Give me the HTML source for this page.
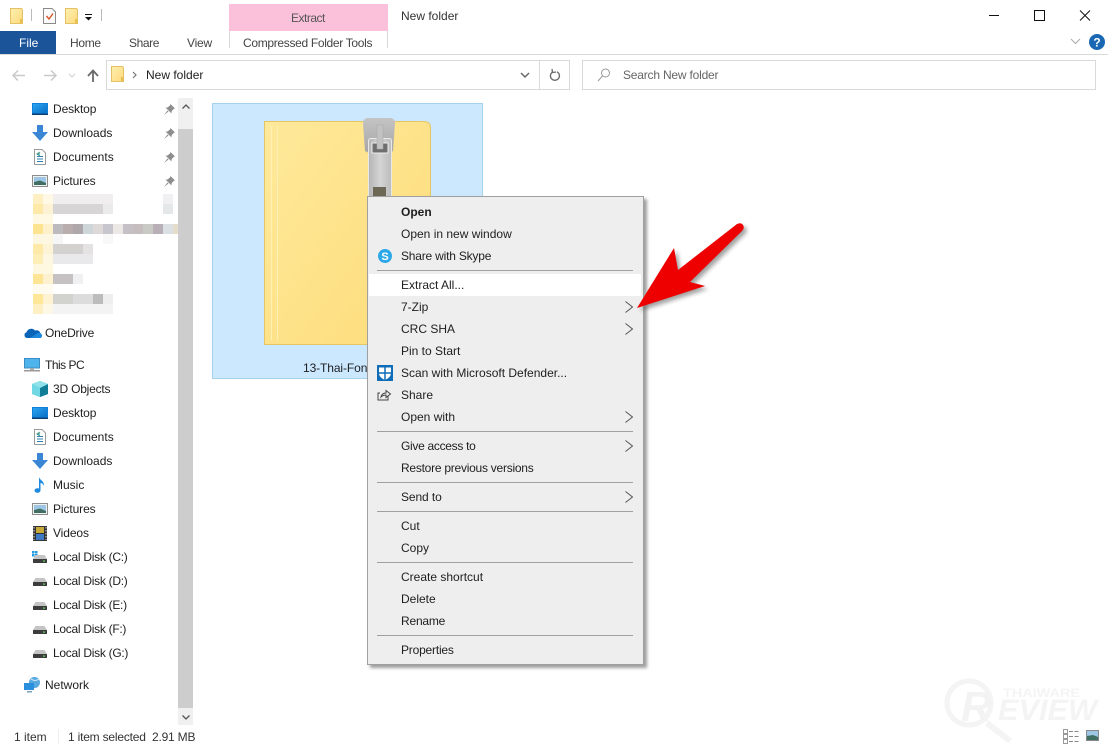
<!DOCTYPE html>
<html><head><meta charset="utf-8"><title>New folder</title>
<style>
html,body{margin:0;padding:0;background:#fff;}
body{width:1108px;height:748px;position:relative;overflow:hidden;font-family:"Liberation Sans",sans-serif;font-size:12px;color:#1e1e1e;}
.t{position:absolute;white-space:nowrap;line-height:16px;height:16px;}
.a{position:absolute;}
svg{position:absolute;overflow:visible;}
.sep{position:absolute;left:377px;width:256px;height:1px;background:#a0a0a0;}
</style></head><body>
<svg width="0" height="0" style="left:0;top:0"><defs>
<linearGradient id="fy" x1="0" y1="0" x2="1" y2="1"><stop offset="0" stop-color="#fff0b0"/><stop offset="1" stop-color="#fdd97c"/></linearGradient>
<linearGradient id="big" x1="0" y1="0" x2="1" y2="1"><stop offset="0" stop-color="#fee99a"/><stop offset="1" stop-color="#fedc7a"/></linearGradient>
<linearGradient id="zip" x1="0" y1="0" x2="1" y2="0"><stop offset="0" stop-color="#b4b4b4"/><stop offset=".5" stop-color="#d4d4d4"/><stop offset="1" stop-color="#bcbcbc"/></linearGradient>
<linearGradient id="cap" x1="0" y1="0" x2="0" y2="1"><stop offset="0" stop-color="#c4c4c4"/><stop offset="1" stop-color="#a6a6a6"/></linearGradient>
<linearGradient id="blu" x1="0" y1="0" x2="1" y2="1"><stop offset="0" stop-color="#2aa5f0"/><stop offset="1" stop-color="#0a6fc8"/></linearGradient>
<symbol id="sf" viewBox="0 0 13 16"><path d="M.5.5H11.5L12.5 1.5V15.5H.5Z" fill="url(#fy)" stroke="#e3c164"/><rect x="10" y="11" width="2.5" height="4.5" fill="#e9c04f"/></symbol>
<symbol id="desk" viewBox="0 0 16 12"><rect width="16" height="12" fill="#0f80dc"/><rect x="1" y="1" width="14" height="9" fill="url(#blu)"/><rect y="10.5" width="16" height="1.5" fill="#0a3f70"/></symbol>
<symbol id="down" viewBox="0 0 16 16"><path d="M5 0H11V7H16L8 16L0 7H5Z" fill="#3b87d6"/></symbol>
<symbol id="doc" viewBox="0 0 12 16"><path d="M.5.5H8L11.5 4V15.5H.5Z" fill="#fff" stroke="#9a9a9a"/><path d="M3 5H6M3 7.5H9M3 10H9M3 12.500H9" stroke="#2f7fb5"/><path d="M6 3L3 5L6 7" fill="none" stroke="#3c9a7a"/></symbol>
<symbol id="pic" viewBox="0 0 16 12"><rect x=".5" y=".5" width="15" height="11" fill="#f0f0f0" stroke="#8c8c8c"/><rect x="2" y="2" width="12" height="8" fill="#9cc6e4"/><path d="M2 7L8 5.500L14 8V10H2Z" fill="#3f6f63"/></symbol>
<symbol id="pin" viewBox="0 0 11 11"><path d="M6.500 0L11 4.500L9.500 5L7.500 7.500L7.500 9.500L1.500 3.500L3.500 3.500L6 1.500Z M3.500 6.500L0 11L4.500 7.500Z" fill="#8d8d8d"/></symbol>
<symbol id="disk" viewBox="0 0 14 8"><path d="M2.500 0H11.500L14 4H0Z" fill="#c4c4c4"/><rect y="4" width="14" height="4" fill="#3c3c3c"/><rect x="10" y="5.500" width="2" height="1.200" fill="#5fd35f"/></symbol>
<symbol id="arr" viewBox="0 0 8 12"><path d="M.5.500L7.500 6L.5 11.500" fill="none" stroke="#555"/></symbol>
</defs></svg>

<!-- title / quick access -->
<svg style="left:10px;top:8px" width="13" height="16"><use href="#sf" width="13" height="16"/></svg>
<div class="a" style="left:31px;top:9px;width:1px;height:12px;background:#bbb"></div>
<svg style="left:43px;top:8px" width="13" height="16"><path d="M.5.500H9L12.500 4V15.500H.5Z" fill="#fafafa" stroke="#8a8a8a"/><path d="M3.500 8L6 11L10 5.500" fill="none" stroke="#d9542b" stroke-width="1.400"/></svg>
<svg style="left:65px;top:8px" width="13" height="16"><use href="#sf" width="13" height="16"/></svg>
<svg style="left:85px;top:14px" width="8" height="7"><rect width="7" height="1" fill="#111"/><path d="M0 3H7L3.500 6.500Z" fill="#111"/></svg>
<div class="a" style="left:101px;top:9px;width:1px;height:12px;background:#bbb"></div>
<div class="a" style="left:229px;top:4px;width:159px;height:27px;background:#fcc1da"></div>
<div class="t" style="left:291px;top:10px;color:#555;letter-spacing:-.5px">Extract</div>
<div class="t" style="left:401px;top:8px;color:#333">New folder</div>
<svg style="left:985px;top:8px" width="110" height="16"><path d="M4 7.500H14" stroke="#111"/><rect x="49.500" y="2.500" width="10" height="10" fill="none" stroke="#111"/><path d="M95 2.500L105 12.500M105 2.500L95 12.500" stroke="#111"/></svg>

<!-- ribbon -->
<div class="a" style="left:0;top:31px;width:56px;height:23px;background:#1b5499"></div>
<div class="t" style="left:19px;top:35px;color:#fff;">File</div>
<div class="t" style="left:70px;top:35px;color:#444;letter-spacing:-.3px">Home</div>
<div class="t" style="left:129px;top:35px;color:#444;letter-spacing:-.4px">Share</div>
<div class="t" style="left:187px;top:35px;color:#444;letter-spacing:-.2px">View</div>
<div class="a" style="left:229px;top:31px;width:1px;height:17px;background:#d8d8d8"></div>
<div class="a" style="left:387px;top:31px;width:1px;height:17px;background:#d8d8d8"></div>
<div class="t" style="left:243px;top:35px;color:#444;letter-spacing:-.32px">Compressed Folder Tools</div>
<div class="a" style="left:0;top:54px;width:1108px;height:1px;background:#dadada"></div>
<svg style="left:1070px;top:38px" width="11" height="7"><path d="M1 1L5.500 5.500L10 1" fill="none" stroke="#a8a8a8"/></svg>
<svg style="left:1089px;top:34px" width="16" height="16"><circle cx="8" cy="8" r="8" fill="#1a68b4"/><text x="8" y="12.500" text-anchor="middle" font-family="Liberation Sans" font-weight="bold" font-size="12" fill="#fff">?</text></svg>

<!-- nav -->
<svg style="left:12px;top:69px" width="100" height="14"><path d="M1.500 6.500H13M6 1.500L1 6.500L6 11.500" fill="none" stroke="#c9c9c9" stroke-width="1.500"/><path d="M43.500 6.500H32M39 1.500L44 6.500L39 11.500" fill="none" stroke="#c9c9c9" stroke-width="1.500"/><path d="M57 5L60 8L63 5" fill="none" stroke="#cfcfcf"/><path d="M81 13V2M76 7L81 1.500L86 7" fill="none" stroke="#6a6a6a" stroke-width="1.800"/></svg>
<div class="a" style="left:106px;top:60px;width:462px;height:28px;border:1px solid #d9d9d9"></div>
<div class="a" style="left:539px;top:61px;width:1px;height:28px;background:#d9d9d9"></div>
<svg style="left:111px;top:66px" width="13" height="16"><use href="#sf" width="13" height="16"/></svg>
<svg style="left:132px;top:71px" width="5" height="8"><path d="M1 1L4 4L1 7" fill="none" stroke="#777" stroke-width="1.200"/></svg>
<div class="t" style="left:146px;top:67px">New folder</div>
<svg style="left:520px;top:72px" width="10" height="6"><path d="M1 1L5 5L9 1" fill="none" stroke="#666" stroke-width="1.500"/></svg>
<svg style="left:549px;top:68px" width="12" height="14"><path d="M3.500 4A4.500 4.500 0 1 0 8 3.800" fill="none" stroke="#6a6a6a" stroke-width="1.300"/><path d="M3 1L3.500 4.500L7 4" fill="none" stroke="#6a6a6a" stroke-width="1.300"/></svg>
<div class="a" style="left:582px;top:60px;width:512px;height:28px;border:1px solid #d9d9d9"></div>
<svg style="left:597px;top:68px" width="14" height="14"><circle cx="8.500" cy="5" r="4" fill="none" stroke="#999"/><path d="M5.500 8L1 13" stroke="#999"/></svg>
<div class="t" style="left:623px;top:67px;color:#666;letter-spacing:-.2px">Search New folder</div>

<!-- sidebar -->
<svg style="left:32px;top:103px" width="16" height="12"><use href="#desk" width="16" height="12"/></svg>
<div class="t" style="left:53px;top:101px;letter-spacing:-.1px">Desktop</div>
<svg style="left:32px;top:125px" width="16" height="16"><use href="#down" width="16" height="16"/></svg>
<div class="t" style="left:53px;top:125px">Downloads</div>
<svg style="left:34px;top:149px" width="12" height="16"><use href="#doc" width="12" height="16"/></svg>
<div class="t" style="left:53px;top:149px">Documents</div>
<svg style="left:32px;top:175px" width="16" height="12"><use href="#pic" width="16" height="12"/></svg>
<div class="t" style="left:53px;top:173px;letter-spacing:-.1px">Pictures</div>
<svg style="left:164px;top:104px" width="11" height="11"><use href="#pin" width="11" height="11"/></svg>
<svg style="left:164px;top:128px" width="11" height="11"><use href="#pin" width="11" height="11"/></svg>
<svg style="left:164px;top:152px" width="11" height="11"><use href="#pin" width="11" height="11"/></svg>
<svg style="left:164px;top:176px" width="11" height="11"><use href="#pin" width="11" height="11"/></svg>

<!-- blurred rows -->
<svg style="left:33px;top:194px" width="145" height="120">
<rect x="0" y="0" width="10" height="10" fill="#fff0c4"/><rect x="10" y="0" width="10" height="10" fill="#fff8e4"/><rect x="20" y="0" width="60" height="10" fill="#f0eeee"/><rect x="130" y="0" width="10" height="10" fill="#f0f0f2"/>
<rect x="0" y="10" width="10" height="10" fill="#fee9a8"/><rect x="10" y="10" width="10" height="10" fill="#fdf3d4"/><rect x="20" y="10" width="50" height="10" fill="#d8d5d6"/><rect x="70" y="10" width="10" height="10" fill="#ebebeb"/><rect x="130" y="10" width="10" height="10" fill="#e4e8e8"/>
<rect x="0" y="20" width="20" height="10" fill="#fff8e2"/>
<rect x="0" y="30" width="10" height="10" fill="#fee391"/><rect x="10" y="30" width="10" height="10" fill="#fdf1cc"/><rect x="20" y="30" width="10" height="10" fill="#bdbabd"/><rect x="30" y="30" width="10" height="10" fill="#b9adae"/><rect x="40" y="30" width="10" height="10" fill="#aea8aa"/><rect x="50" y="30" width="10" height="10" fill="#cfd6da"/><rect x="60" y="30" width="10" height="10" fill="#dcd9d8"/><rect x="70" y="30" width="10" height="10" fill="#c7c5cd"/><rect x="80" y="30" width="10" height="10" fill="#ece8e6"/><rect x="90" y="30" width="10" height="10" fill="#c4c0c5"/><rect x="100" y="30" width="10" height="10" fill="#c5bdbe"/><rect x="110" y="30" width="10" height="10" fill="#c9c9c6"/><rect x="120" y="30" width="10" height="10" fill="#b9afb6"/><rect x="130" y="30" width="10" height="10" fill="#dbe0e4"/><rect x="140" y="30" width="5" height="10" fill="#e5dccb"/>
<rect x="0" y="40" width="20" height="10" fill="#fdf6e0"/><rect x="20" y="40" width="10" height="10" fill="#f6f6f6"/><rect x="70" y="40" width="10" height="10" fill="#f8f8f8"/>
<rect x="0" y="50" width="10" height="10" fill="#feeaa8"/><rect x="10" y="50" width="10" height="10" fill="#fdf4d6"/><rect x="20" y="50" width="30" height="10" fill="#d4d2d0"/><rect x="50" y="50" width="10" height="10" fill="#e4e2e2"/>
<rect x="0" y="60" width="10" height="10" fill="#feeeb8"/><rect x="10" y="60" width="10" height="10" fill="#fdf6e0"/><rect x="20" y="60" width="40" height="10" fill="#e9e8ea"/>
<rect x="0" y="70" width="20" height="10" fill="#fff8e0"/>
<rect x="0" y="80" width="10" height="10" fill="#fee596"/><rect x="10" y="80" width="10" height="10" fill="#fdf1cf"/><rect x="20" y="80" width="20" height="10" fill="#c6c2c3"/><rect x="40" y="80" width="10" height="10" fill="#f0f0f2"/>
<rect x="0" y="90" width="20" height="10" fill="#fffbee"/>
<rect x="0" y="100" width="10" height="10" fill="#fee798"/><rect x="10" y="100" width="10" height="10" fill="#fdf3d2"/><rect x="20" y="100" width="20" height="10" fill="#d2d2cf"/><rect x="40" y="100" width="20" height="10" fill="#dcdcdc"/><rect x="60" y="100" width="10" height="10" fill="#bcbcbc"/><rect x="70" y="100" width="10" height="10" fill="#eeeeee"/>
<rect x="0" y="110" width="10" height="10" fill="#fff0c4"/><rect x="10" y="110" width="10" height="10" fill="#fdf8e6"/><rect x="20" y="110" width="60" height="10" fill="#f3f3f3"/>
</svg>

<svg style="left:24px;top:327px" width="17" height="11"><path d="M3 11A3 3 0 0 1 2.500 5.200A5 5 0 0 1 11 3.500A4 4 0 0 1 14 11Z" fill="#0a64b8"/><path d="M6 11L17 11A2.500 2.500 0 0 0 13 6.500Z" fill="#1e88dc"/></svg>
<div class="t" style="left:45px;top:325px;letter-spacing:-.2px">OneDrive</div>
<svg style="left:24px;top:358px" width="16" height="14"><rect x=".5" y=".5" width="15" height="9.500" fill="#4fb4ec" stroke="#3b8cc0"/><rect x="6" y="10" width="4" height="2" fill="#aaa"/><rect y="12" width="16" height="1.500" fill="#9a9a9a"/></svg>
<div class="t" style="left:45px;top:357px;letter-spacing:-.5px">This PC</div>
<svg style="left:32px;top:381px" width="16" height="16"><path d="M8 0L16 3V13L8 16L0 13V3Z" fill="#1fa8b8"/><path d="M8 7L16 3V13L8 16Z" fill="#0f7d96"/><path d="M0 3L8 0L16 3L8 7Z" fill="#8fe2ea"/><path d="M0 3L8 7V16L0 13Z" fill="#6fd8e4"/></svg>
<div class="t" style="left:53px;top:381px;letter-spacing:-.2px">3D Objects</div>
<svg style="left:32px;top:407px" width="16" height="12"><use href="#desk" width="16" height="12"/></svg>
<div class="t" style="left:53px;top:405px;letter-spacing:-.1px">Desktop</div>
<svg style="left:34px;top:429px" width="12" height="16"><use href="#doc" width="12" height="16"/></svg>
<div class="t" style="left:53px;top:429px">Documents</div>
<svg style="left:32px;top:453px" width="16" height="16"><use href="#down" width="16" height="16"/></svg>
<div class="t" style="left:53px;top:453px">Downloads</div>
<svg style="left:34px;top:477px" width="12" height="16"><ellipse cx="3.500" cy="13.500" rx="3" ry="2.300" fill="#1b8ae0"/><path d="M5 13V0C5.500 3 10.500 4 10 9C9 6.500 7.500 6 6.500 6V13Z" fill="#1b8ae0"/></svg>
<div class="t" style="left:53px;top:477px">Music</div>
<svg style="left:32px;top:503px" width="16" height="12"><use href="#pic" width="16" height="12"/></svg>
<div class="t" style="left:53px;top:501px;letter-spacing:-.1px">Pictures</div>
<svg style="left:33px;top:526px" width="14" height="15"><rect width="14" height="15" fill="#333"/><rect x="3" y="1" width="8" height="6" fill="#c9a83a"/><rect x="3" y="8" width="8" height="6" fill="#3d79c4"/><path d="M1 1V14M13 1V14" stroke="#ddd" stroke-dasharray="1.500 1.500"/></svg>
<div class="t" style="left:53px;top:525px;letter-spacing:-.1px">Videos</div>
<svg style="left:32px;top:551px" width="15" height="12"><g fill="#1e9ae0"><rect width="2.500" height="2.500"/><rect x="3" width="2.500" height="2.500"/><rect y="3" width="2.500" height="2.500"/><rect x="3" y="3" width="2.500" height="2.500"/></g><use href="#disk" y="4" x="1" width="14" height="8"/></svg>
<div class="t" style="left:53px;top:549px;letter-spacing:-.28px">Local Disk (C:)</div>
<svg style="left:33px;top:578px" width="14" height="8"><use href="#disk" width="14" height="8"/></svg>
<div class="t" style="left:53px;top:573px;letter-spacing:-.28px">Local Disk (D:)</div>
<svg style="left:33px;top:602px" width="14" height="8"><use href="#disk" width="14" height="8"/></svg>
<div class="t" style="left:53px;top:597px;letter-spacing:-.28px">Local Disk (E:)</div>
<svg style="left:33px;top:626px" width="14" height="8"><use href="#disk" width="14" height="8"/></svg>
<div class="t" style="left:53px;top:621px;letter-spacing:-.28px">Local Disk (F:)</div>
<svg style="left:33px;top:650px" width="14" height="8"><use href="#disk" width="14" height="8"/></svg>
<div class="t" style="left:53px;top:645px;letter-spacing:-.28px">Local Disk (G:)</div>
<svg style="left:24px;top:677px" width="17" height="16"><circle cx="10.500" cy="5.500" r="5.500" fill="#5aa8e0"/><path d="M7 2Q11 5 15 2" fill="none" stroke="#d5ecfa"/><rect y="6" width="10" height="7" fill="#2a8fdc"/><rect x="3" y="14" width="5" height="1.500" fill="#7a9fb8"/></svg>
<div class="t" style="left:45px;top:677px">Network</div>

<!-- scrollbar -->
<div class="a" style="left:178px;top:98px;width:15px;height:627px;background:#f0f0f0"></div>
<div class="a" style="left:178px;top:129px;width:15px;height:579px;background:#cdcdcd"></div>
<svg style="left:182px;top:104px" width="8" height="5"><path d="M.5 4.500L4 1L7.500 4.500" fill="none" stroke="#555" stroke-width="1.300"/></svg>
<svg style="left:182px;top:715px" width="8" height="5"><path d="M.5.500L4 4L7.500.5" fill="none" stroke="#555" stroke-width="1.300"/></svg>

<!-- selected item -->
<div class="a" style="left:212px;top:103px;width:269px;height:274px;background:#cce8ff;border:1px solid #a6d2ee"></div>
<svg style="left:264px;top:118px" width="170" height="230">
<path d="M.5 3.500H160Q166.500 3.500 166.500 10V226.500H.5Z" fill="url(#big)" stroke="#e6c566"/>
<path d="M7.500 8V222M13.500 8V222" stroke="#fff0b8"/>
<path d="M103 0H127Q131 1 131 5L129 33L126 35H105L101 33L99 5Q99 1 103 0Z" fill="url(#cap)"/>
<rect x="104.500" y="20.500" width="23" height="70" rx="2" fill="url(#zip)" stroke="#e8e8e8"/>
<rect x="108" y="25" width="16" height="10" fill="#6f6f6f" stroke="#eee"/>
<rect x="113" y="7" width="6" height="24" fill="#c2c2c2" stroke="#a8a8a8" stroke-width=".5"/>
<rect x="109" y="69" width="13" height="9" fill="#6d6856"/>
</svg>
<div class="t" style="left:303px;top:360px;letter-spacing:-.1px">13-Thai-Fon</div>

<!-- context menu -->
<div class="a" style="left:367px;top:196px;width:275px;height:467px;background:#eeeeee;border:1px solid #a0a0a0;box-shadow:3px 3px 3px rgba(80,80,80,.55)"></div>
<div class="a" style="left:369px;top:274px;width:272px;height:22px;background:#fff"></div>
<div class="t" style="left:401px;top:204px;font-weight:bold">Open</div>
<div class="t" style="left:401px;top:226px">Open in new window</div>
<div class="t" style="left:401px;top:248px;letter-spacing:-.2px">Share with Skype</div>
<div class="sep" style="top:270px"></div>
<div class="t" style="left:401px;top:277px">Extract All...</div>
<div class="t" style="left:401px;top:299px">7-Zip</div>
<div class="t" style="left:401px;top:321px">CRC SHA</div>
<div class="t" style="left:401px;top:343px">Pin to Start</div>
<div class="t" style="left:401px;top:365px">Scan with Microsoft Defender...</div>
<div class="t" style="left:401px;top:387px">Share</div>
<div class="t" style="left:401px;top:409px">Open with</div>
<div class="sep" style="top:431px"></div>
<div class="t" style="left:401px;top:438px;letter-spacing:-.3px">Give access to</div>
<div class="t" style="left:401px;top:460px;letter-spacing:-.25px">Restore previous versions</div>
<div class="sep" style="top:482px"></div>
<div class="t" style="left:401px;top:489px;letter-spacing:-.1px">Send to</div>
<div class="sep" style="top:511px"></div>
<div class="t" style="left:401px;top:518px">Cut</div>
<div class="t" style="left:401px;top:540px">Copy</div>
<div class="sep" style="top:562px"></div>
<div class="t" style="left:401px;top:569px">Create shortcut</div>
<div class="t" style="left:401px;top:591px">Delete</div>
<div class="t" style="left:401px;top:613px;letter-spacing:-.2px">Rename</div>
<div class="sep" style="top:635px"></div>
<div class="t" style="left:401px;top:642px;letter-spacing:-.2px">Properties</div>
<svg style="left:625px;top:301px" width="8" height="12"><use href="#arr" width="8" height="12"/></svg>
<svg style="left:625px;top:323px" width="8" height="12"><use href="#arr" width="8" height="12"/></svg>
<svg style="left:625px;top:411px" width="8" height="12"><use href="#arr" width="8" height="12"/></svg>
<svg style="left:625px;top:440px" width="8" height="12"><use href="#arr" width="8" height="12"/></svg>
<svg style="left:625px;top:491px" width="8" height="12"><use href="#arr" width="8" height="12"/></svg>
<svg style="left:378px;top:249px" width="14" height="14"><circle cx="7" cy="7" r="7" fill="#2aa8e8"/><text x="7" y="11" text-anchor="middle" font-family="Liberation Sans" font-weight="bold" font-size="11" fill="#fff">S</text></svg>
<svg style="left:377px;top:365px" width="16" height="16"><rect width="16" height="16" fill="#0f6cb8"/><path d="M2 2.500H14V8Q14 12.500 8 15Q2 12.500 2 8Z" fill="#fff"/><path d="M8 2V15M2 8H14" stroke="#0f6cb8" stroke-width="1.500"/></svg>
<svg style="left:377px;top:388px" width="14" height="13"><path d="M3 5H1V12H11V8" fill="none" stroke="#444"/><path d="M4 9Q5 5 9 5V2.500L13.500 6L9 9.500V7Q6 7 4 9Z" fill="none" stroke="#444"/></svg>

<!-- arrow -->
<svg style="left:630px;top:215px" width="125" height="105">
<defs><filter id="bl" x="-20%" y="-20%" width="140%" height="140%"><feGaussianBlur stdDeviation="2"/></filter></defs>
<path d="M7 93L44 33L48 55L107 9Q111 7 113 10Q115 13 112 16L60 67L75 71Z" fill="#555" opacity=".55" filter="url(#bl)" transform="translate(3 3)"/>
<path d="M7 93L44 33L48 55L107 9Q111 7 113 10Q115 13 112 16L60 67L75 71Z" fill="#ee0000"/>
</svg>

<!-- status -->
<div class="t" style="left:14px;top:729px;color:#333">1 item</div>
<div class="a" style="left:58px;top:729px;width:1px;height:15px;background:#eee"></div>
<div class="t" style="left:68px;top:729px;color:#333;letter-spacing:-.2px">1 item selected&nbsp; 2.91 MB</div>

<!-- watermark -->
<svg style="left:945px;top:675px" width="160" height="70">
<circle cx="24" cy="28" r="22" fill="none" stroke="#f4f4f4" stroke-width="5"/>
<path d="M42 48L65 66" stroke="#f4f4f4" stroke-width="6"/>
<text x="16" y="46" font-family="Liberation Sans" font-weight="bold" font-style="italic" font-size="42" fill="#f3f3f3">R</text>
<text x="53" y="45" font-family="Liberation Sans" font-weight="bold" font-style="italic" font-size="30" fill="#f4f4f4" textLength="99" lengthAdjust="spacingAndGlyphs">EVIEW</text>
<text x="58" y="22" font-family="Liberation Sans" font-weight="bold" font-size="12" fill="#f4f4f4" textLength="77" lengthAdjust="spacingAndGlyphs">THAIWARE</text>
</svg>
<svg style="left:1063px;top:729px" width="36" height="16"><rect x=".5" y=".5" width="4" height="4" fill="none" stroke="#999"/><rect x=".5" y="5.500" width="4" height="4" fill="none" stroke="#999"/><rect x=".5" y="10.500" width="4" height="4" fill="none" stroke="#999"/><path d="M6 2.500H16M6 7.500H16M6 12.500H16" stroke="#888" stroke-dasharray="4 1.500"/><rect x="23.500" y="1.500" width="12" height="10" fill="#9cc6e4" stroke="#8a8a8a"/><path d="M24 7L30 6L35 8V11H24Z" fill="#3f6f63"/></svg>
</body></html>
